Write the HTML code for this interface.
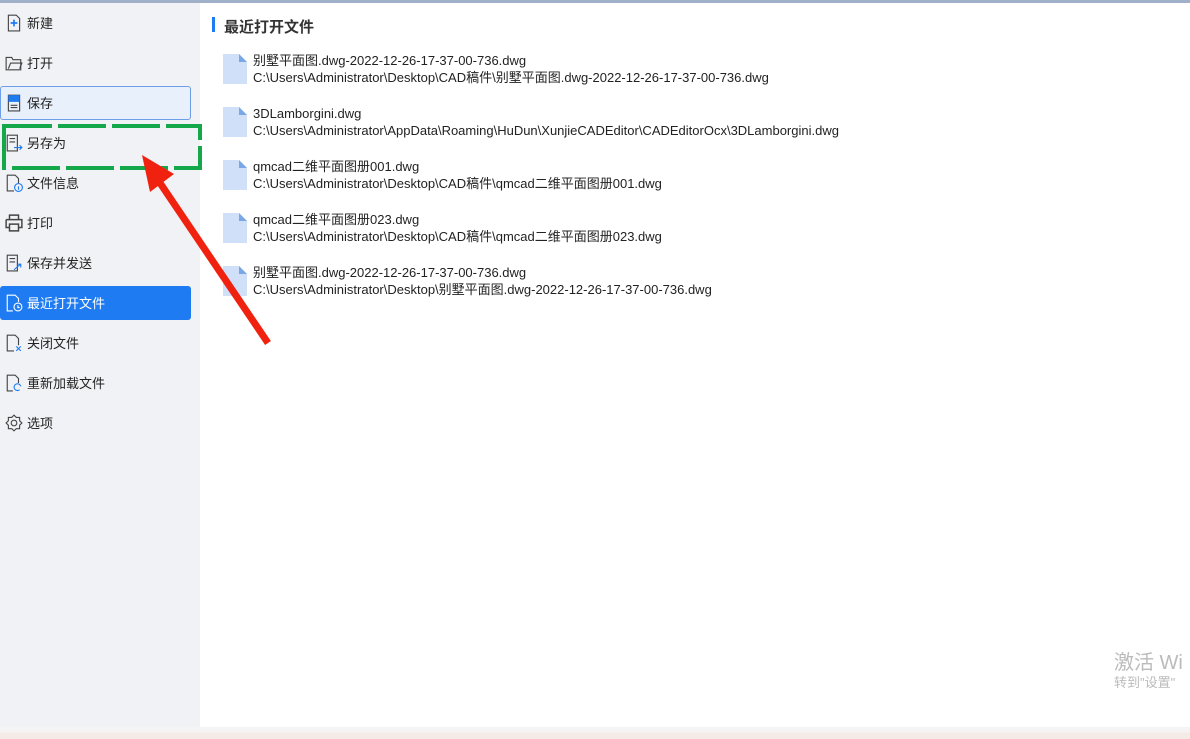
<!DOCTYPE html>
<html><head><meta charset="utf-8"><style>
*{margin:0;padding:0;box-sizing:border-box}
body{width:1190px;height:739px;overflow:hidden;background:#fff;position:relative;font-family:"Liberation Sans","Noto Sans CJK SC",sans-serif;color:#222}
.top{position:absolute;left:0;top:0;width:1190px;height:3px;background:#9fb0c8}
.side{position:absolute;left:0;top:3px;width:200px;height:724px;background:#f0f2f5}
.it{position:absolute;left:0;width:191px;height:34px;font-size:13px;line-height:36px;padding-left:27px;color:#222}
.ic{position:absolute;left:5px;top:8px;width:18px;height:18px}
.sel{background:#e8f0fc;border:1px solid #6f9ee8;border-radius:3px;line-height:34px;padding-left:26px}
.sel .ic{left:4px;top:7px}
.act{background:#1f7bf2;color:#fff;border-radius:3px}
.title{position:absolute;left:224px;top:16px;font-size:15px;font-weight:bold;color:#333}
.bar{position:absolute;left:212px;top:17px;width:3px;height:15px;background:#1f7bf2}
.f{position:absolute;left:223px;font-size:13px;line-height:17px}
.f svg{position:absolute;left:0;top:2px}
.f div{margin-left:30px;white-space:nowrap;color:#222}
.wm{position:absolute;left:1114px;top:646px;color:#bbb;font-size:20px}
.wm2{position:absolute;left:1114px;top:672px;color:#bbb;font-size:13px}
.bot{position:absolute;left:0;top:727px;width:1190px;height:12px;background:linear-gradient(#f4f4f4 0,#f4f4f4 5px,#f5ebe6 6px)}
</style></head><body>
<div class="top"></div>
<div class="side">
<div class="it" style="top:3px"><svg class="ic" viewBox="0 0 16 16"><path d="M3 1h7l3 3v11H3z" fill="none" stroke="#444"/><path d="M8 5v6M5 8h6" stroke="#1f7bf2" stroke-width="1.5"/></svg>新建</div>
<div class="it" style="top:43px"><svg class="ic" viewBox="0 0 16 16"><path d="M1 3h5l1 2h7v9H1z" fill="none" stroke="#444"/><path d="M3 13l2-5h10l-2 5" fill="none" stroke="#444"/></svg>打开</div>
<div class="it sel" style="top:83px"><svg class="ic" viewBox="0 0 16 16"><path d="M3 1h10v14H3z" fill="none" stroke="#444"/><path d="M3 1h10v6H3z" fill="#1f7bf2"/><path d="M5 10h6M5 12h6" stroke="#444"/></svg>保存</div>
<div class="it" style="top:123px"><svg class="ic" viewBox="0 0 16 16"><path d="M2 1h9v14H2z" fill="none" stroke="#444"/><path d="M4 4h5M4 7h5" stroke="#444"/><path d="M8 12h7M13 10l2 2-2 2" fill="none" stroke="#1f7bf2"/></svg>另存为</div>
<div class="it" style="top:163px"><svg class="ic" viewBox="0 0 16 16"><path d="M8 15H2V1h7l3 3v4" fill="none" stroke="#444"/><circle cx="12" cy="12" r="3.5" fill="none" stroke="#1f7bf2"/><path d="M12 11v3" stroke="#1f7bf2"/></svg>文件信息</div>
<div class="it" style="top:203px"><svg class="ic" viewBox="0 0 16 16"><path d="M4 5V1h8v4M1 5h14v7h-3M4 12H1V5" fill="none" stroke="#444" stroke-width="1.3"/><path d="M4 9h8v6H4z" fill="none" stroke="#444" stroke-width="1.3"/></svg>打印</div>
<div class="it" style="top:243px"><svg class="ic" viewBox="0 0 16 16"><path d="M2 1h9v14H2z" fill="none" stroke="#444"/><path d="M4 4h5M4 7h5" stroke="#444"/><path d="M8 14l6-5M11 9h3v3" fill="none" stroke="#1f7bf2"/></svg>保存并发送</div>
<div class="it act" style="top:283px"><svg class="ic" viewBox="0 0 16 16"><path d="M7 15H2V1h7l3 3v3" fill="none" stroke="#fff"/><circle cx="11.5" cy="11.5" r="3.5" fill="none" stroke="#fff"/><path d="M11.5 10v2h1.5" fill="none" stroke="#fff"/></svg>最近打开文件</div>
<div class="it" style="top:323px"><svg class="ic" viewBox="0 0 16 16"><path d="M8 15H2V1h7l3 3v6" fill="none" stroke="#444"/><path d="M10 11l4 4M14 11l-4 4" stroke="#1f7bf2"/></svg>关闭文件</div>
<div class="it" style="top:363px"><svg class="ic" viewBox="0 0 16 16"><path d="M7 15H2V1h7l3 3v4" fill="none" stroke="#444"/><path d="M14 11a3 3 0 1 0-1 3" fill="none" stroke="#1f7bf2"/></svg>重新加载文件</div>
<div class="it" style="top:403px"><svg class="ic" viewBox="0 0 16 16"><circle cx="8" cy="8" r="2.5" fill="none" stroke="#444"/><path d="M8 1l2 2 3 0 0 3 2 2-2 2 0 3-3 0-2 2-2-2-3 0 0-3-2-2 2-2 0-3 3 0z" fill="none" stroke="#444"/></svg>选项</div>
</div>
<div class="bar"></div><div class="title">最近打开文件</div>
<div class="f" style="top:52px"><svg width="24" height="30" viewBox="0 0 24 30"><path d="M0 0h16l8 8v22H0z" fill="#cfe0f8"/><path d="M16 0v8h8z" fill="#7aa8e6"/></svg><div>别墅平面图.dwg-2022-12-26-17-37-00-736.dwg</div><div>C:\Users\Administrator\Desktop\CAD稿件\别墅平面图.dwg-2022-12-26-17-37-00-736.dwg</div></div>
<div class="f" style="top:105px"><svg width="24" height="30" viewBox="0 0 24 30"><path d="M0 0h16l8 8v22H0z" fill="#cfe0f8"/><path d="M16 0v8h8z" fill="#7aa8e6"/></svg><div>3DLamborgini.dwg</div><div>C:\Users\Administrator\AppData\Roaming\HuDun\XunjieCADEditor\CADEditorOcx\3DLamborgini.dwg</div></div>
<div class="f" style="top:158px"><svg width="24" height="30" viewBox="0 0 24 30"><path d="M0 0h16l8 8v22H0z" fill="#cfe0f8"/><path d="M16 0v8h8z" fill="#7aa8e6"/></svg><div>qmcad二维平面图册001.dwg</div><div>C:\Users\Administrator\Desktop\CAD稿件\qmcad二维平面图册001.dwg</div></div>
<div class="f" style="top:211px"><svg width="24" height="30" viewBox="0 0 24 30"><path d="M0 0h16l8 8v22H0z" fill="#cfe0f8"/><path d="M16 0v8h8z" fill="#7aa8e6"/></svg><div>qmcad二维平面图册023.dwg</div><div>C:\Users\Administrator\Desktop\CAD稿件\qmcad二维平面图册023.dwg</div></div>
<div class="f" style="top:264px"><svg width="24" height="30" viewBox="0 0 24 30"><path d="M0 0h16l8 8v22H0z" fill="#cfe0f8"/><path d="M16 0v8h8z" fill="#7aa8e6"/></svg><div>别墅平面图.dwg-2022-12-26-17-37-00-736.dwg</div><div>C:\Users\Administrator\Desktop\别墅平面图.dwg-2022-12-26-17-37-00-736.dwg</div></div>
<svg style="position:absolute;left:0;top:0" width="1190" height="739">
<rect x="4" y="126" width="196" height="42" fill="none" stroke="#14a84a" stroke-width="4" stroke-dasharray="48,6"/>
<line x1="268" y1="343" x2="158" y2="180" stroke="#f0220f" stroke-width="7"/>
<polygon points="142,155 174,174 150,192" fill="#f0220f"/>
</svg>
<div class="wm">激活 Wi</div><div class="wm2">转到"设置"</div>
<div class="bot"></div>
</body></html>
